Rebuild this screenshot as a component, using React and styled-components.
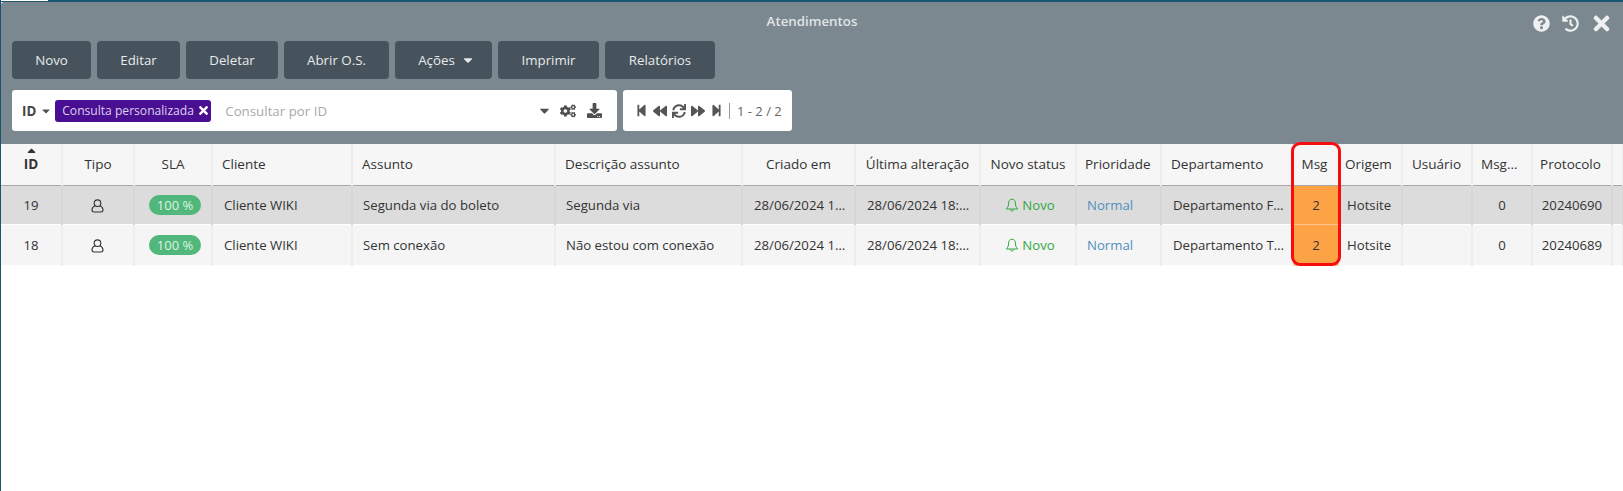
import React from 'react';
import styled, { createGlobalStyle } from 'styled-components';
import { FaQuestionCircle, FaHistory, FaTimes, FaCogs, FaDownload, FaStepBackward, FaBackward, FaSync, FaForward, FaStepForward, FaCaretDown, FaCaretUp } from 'react-icons/fa';

const Global = createGlobalStyle`
  html, body { margin: 0; padding: 0; background: #fff; }
  body { font-family: "Open Sans", "Liberation Sans", sans-serif; }
  * { box-sizing: border-box; }
`;

const Page = styled.div`
  position: relative;
  width: 1623px;
  height: 491px;
  overflow: hidden;
  border-left: 1px solid #1c5472;
`;
const TopStrip = styled.div`
  height: 2px;
  background: #1c5472;
  margin-left: -1px;
`;
const TopTab = styled.div`
  width: 48px;
  height: 1px;
  background: #fff;
`;
const Panel = styled.div`
  height: 142px;
  background: #7b888f;
  padding: 0 11px;
  border-top-left-radius: 3px;
  display: flex;
  flex-direction: column;
`;
const TitleBar = styled.div`
  height: 39px;
  display: flex;
  align-items: center;
  justify-content: center;
  position: relative;
`;
const Title = styled.div`
  font-size: 13.3px;
  font-weight: 600;
  color: #e0e4e6;
  margin-top: -2px;
`;
const WindowIcons = styled.div`
  position: absolute;
  right: -1px;
  top: 10px;
  display: flex;
  align-items: center;
  gap: 12px;
  color: #eef0f1;
  svg { display: block; }
  svg:last-child { margin-left: -1px; }
`;
const Toolbar = styled.div`
  display: flex;
  gap: 6px;
`;
const Button = styled.button`
  height: 38px;
  width: ${p => p.$w}px;
  border: 0;
  border-radius: 4px;
  background: #47535c;
  color: #e8eaeb;
  font: 400 13.3px "Open Sans", sans-serif;
  display: flex;
  align-items: center;
  justify-content: center;
  gap: 6px;
  padding: 0 0 0 ${p => p.$pl || 0}px;
`;
const SearchRow = styled.div`
  display: flex;
  gap: 6px;
  margin-top: 11px;
`;
const SearchBox = styled.div`
  width: 605px;
  height: 41px;
  background: #fff;
  border-radius: 3px;
  display: flex;
  align-items: center;
  padding: 0 15px 0 10px;
  color: #555;
`;
const FieldLabel = styled.span`
  font-size: 13.3px;
  font-weight: 700;
  color: #444;
`;
const Caret = styled.span`
  display: inline-flex;
  font-size: ${p => p.$s || 12}px;
  margin: ${p => p.$m || '0'};
`;
const Chip = styled.span`
  height: 22px;
  width: 156px;
  padding-left: 7px;
  border-radius: 3px;
  background: #4a0e92;
  color: #dcd0ee;
  font-size: 12.1px;
  display: flex;
  align-items: center;
  gap: 3px;
  white-space: nowrap;
`;
const Placeholder = styled.span`
  flex: 1;
  margin-left: 14px;
  font-size: 13.3px;
  color: #a9a9a9;
`;
const Tools = styled.span`
  display: flex;
  align-items: center;
  gap: 11px;
  color: #4f4f4f;
  svg:first-child { margin-right: -3px; }
`;
const Pager = styled.div`
  width: 169px;
  height: 41px;
  background: #fff;
  border-radius: 3px;
  display: flex;
  align-items: center;
  padding-left: 12px;
  color: #555;
  gap: 5px;
`;
const PagerCount = styled.span`
  margin-left: 1px;
  padding-left: 7px;
  border-left: 1px solid #999;
  font-size: 13px;
  line-height: 16px;
  color: #666;
  white-space: nowrap;
`;
const Table = styled.table`
  border-collapse: collapse;
  table-layout: fixed;
  width: 1622px;
  font-size: 13.2px;
  color: #333;
`;
const Th = styled.th`
  height: 41px;
  padding: 0 ${p => p.$pr ?? 4}px 0 ${p => p.$pl ?? 4}px;
  background: #f6f6f6;
  border-right: 2px solid #ededed;
  border-bottom: 1px solid #a8a8a8;
  text-align: ${p => (p.$left ? 'left' : 'center')};
  font-size: 13.5px;
  font-weight: ${p => (p.$bold ? 700 : 400)};
  white-space: nowrap;
  overflow: hidden;
  text-overflow: ellipsis;
  color: #333;
`;
const SortMark = styled.span`
  display: flex;
  justify-content: center;
  align-items: center;
  height: 6px;
  font-size: 13px;
  margin-top: -6px;
  margin-bottom: -1px;
  svg { flex: none; transform: translateY(-2px); }
`;
const Td = styled.td`
  height: ${p => p.$h}px;
  padding: 0 ${p => p.$pr ?? 4}px 0 ${p => p.$pl ?? 4}px;
  background: ${p => (p.$hl ? '#fda245' : p.$even ? '#f5f5f5' : '#dcdcdc')};
  border-right: 2px solid ${p => (p.$even ? '#ededed' : '#d6d6d6')};
  border-bottom: ${p => (p.$hl ? '1px solid #fcc58b' : '1px solid transparent')};
  text-align: ${p => (p.$left ? 'left' : 'center')};
  white-space: nowrap;
  overflow: hidden;
  text-overflow: ellipsis;
  color: ${p => p.$color || '#333'};
`;
const SlaPill = styled.span`
  display: inline-block;
  width: 52px;
  height: 20px;
  line-height: 20px;
  border-radius: 10px;
  background: #52b77a;
  color: #dff3e6;
  font-size: 13px;
  text-align: center;
`;
const Status = styled.span`
  display: inline-flex;
  align-items: center;
  gap: 3px;
  color: #32a83c;
  vertical-align: middle;
  margin-top: 1px;
`;
const Highlight = styled.div`
  position: absolute;
  left: 1290px;
  top: 142px;
  width: 50px;
  height: 124px;
  border: 3px solid #f70d0d;
  border-radius: 9px;
  pointer-events: none;
`;

const UserIcon = () => (
  <svg width="13" height="14" viewBox="0 0 13 14" fill="none" stroke="#333" strokeWidth="1.1" style={{ verticalAlign: 'middle' }}>
    <circle cx="6.500" cy="4.200" r="3.300" />
    <path d="M3.900 6.800C2.100 7.700 1 9 1 10.800c0 1.400.7 2.200 2 2.200h7c1.300 0 2-.8 2-2.200 0-1.800-1.100-3.100-2.900-4" />
  </svg>
);
const BellIcon = () => (
  <svg width="14" height="14" viewBox="0 0 14 14" fill="none" stroke="#32a83c" strokeWidth="1">
    <path d="M7 1.200C4.800 1.200 3.600 2.900 3.600 5c0 3-.9 4.400-2.200 6h11.200c-1.300-1.600-2.200-3-2.200-6 0-2.100-1.200-3.800-3.400-3.800Z" />
    <path d="M5.400 11.400c.1 1 .7 1.600 1.600 1.600s1.500-.6 1.600-1.600" />
  </svg>
);

const columns = [
  { w: 61, label: 'ID', bold: true, sort: true, key: 'id' },
  { w: 72, label: 'Tipo', tdPad: [2, 4], key: 'tipo' },
  { w: 78, label: 'SLA', tdPad: [8, 4], key: 'sla' },
  { w: 140, label: 'Cliente', left: true, thPad: [9, 4], tdPad: [11, 10], key: 'cliente' },
  { w: 203, label: 'Assunto', left: true, thPad: [9, 4], tdPad: [10, 10], key: 'assunto' },
  { w: 187, label: 'Descrição assunto', left: true, thPad: [9, 4], tdPad: [10, 10], key: 'descricao' },
  { w: 113, label: 'Criado em', tdLeft: true, tdPad: [11, 6], key: 'criado' },
  { w: 125, label: 'Última alteração', tdLeft: true, tdPad: [11, 6], key: 'alterado' },
  { w: 96, label: 'Novo status', tdPad: [8, 4], key: 'status' },
  { w: 85, label: 'Prioridade', left: true, thPad: [8, 2], tdPad: [10, 4], key: 'prioridade' },
  { w: 132, label: 'Departamento', left: true, thPad: [9, 4], tdPad: [11, 6], key: 'departamento' },
  { w: 46, label: 'Msg', thPad: [2, 5], key: 'msg', hl: true },
  { w: 63, label: 'Origem', left: true, thPad: [5, 0], tdPad: [7, 0], key: 'origem' },
  { w: 70, label: 'Usuário', left: true, thPad: [9, 4], tdPad: [11, 4], key: 'usuario' },
  { w: 60, label: 'Msg não lidas', thPad: [8, 11], key: 'naoLidas' },
  { w: 80, label: 'Protocolo', thPad: [2, 5], key: 'protocolo' },
  { w: 11, label: 'IP', left: true, thPad: [9, 0], key: 'ip' },
];

const rows = [
  { id: '19', cliente: 'Cliente WIKI', assunto: 'Segunda via do boleto', descricao: 'Segunda via', criado: '28/06/2024 18:12:45', alterado: '28/06/2024 18:12:45', departamento: 'Departamento Financeiro', naoLidas: '0', protocolo: '20240690' },
  { id: '18', cliente: 'Cliente WIKI', assunto: 'Sem conexão', descricao: 'Não estou com conexão', criado: '28/06/2024 18:10:12', alterado: '28/06/2024 18:10:12', departamento: 'Departamento Técnico', naoLidas: '0', protocolo: '20240689' },
];

const renderCell = (col, row) => {
  switch (col.key) {
    case 'tipo': return <UserIcon />;
    case 'sla': return <SlaPill>100 %</SlaPill>;
    case 'status': return <Status><BellIcon />Novo</Status>;
    case 'prioridade': return 'Normal';
    case 'msg': return '2';
    case 'origem': return 'Hotsite';
    default: return row[col.key] || '';
  }
};

export default function App() {
  return (
    <Page>
      <Global />
      <TopStrip><TopTab /></TopStrip>
      <Panel>
        <TitleBar>
          <Title>Atendimentos</Title>
          <WindowIcons>
            <FaQuestionCircle size={17} />
            <FaHistory size={17} />
            <FaTimes size={23} />
          </WindowIcons>
        </TitleBar>
        <Toolbar>
          <Button $w={79}>Novo</Button>
          <Button $w={83}>Editar</Button>
          <Button $w={92}>Deletar</Button>
          <Button $w={105}>Abrir O.S.</Button>
          <Button $w={97} $pl={6}>Ações <Caret $s={14}><FaCaretDown /></Caret></Button>
          <Button $w={101}>Imprimir</Button>
          <Button $w={110}>Relatórios</Button>
        </Toolbar>
        <SearchRow>
          <SearchBox>
            <FieldLabel>ID</FieldLabel>
            <Caret $s={12} $m="0 3px 0 4px"><FaCaretDown /></Caret>
            <Chip>Consulta personalizada <FaTimes size={13} color="#fff" /></Chip>
            <Placeholder>Consultar por ID</Placeholder>
            <Tools>
              <FaCaretDown size={15} />
              <FaCogs size={16} />
              <FaDownload size={15} />
            </Tools>
          </SearchBox>
          <Pager>
            <FaStepBackward size={13} />
            <FaBackward size={14} />
            <FaSync size={14} />
            <FaForward size={14} />
            <FaStepForward size={13} />
            <PagerCount>1 - 2 / 2</PagerCount>
          </Pager>
        </SearchRow>
      </Panel>
      <Table>
        <colgroup>
          {columns.map(c => <col key={c.key} style={{ width: c.w }} />)}
        </colgroup>
        <thead>
          <tr>
            {columns.map(c => (
              <Th key={c.key} $left={c.left} $bold={c.bold} $pl={c.thPad?.[0]} $pr={c.thPad?.[1]}>
                {c.sort && <SortMark><FaCaretUp /></SortMark>}
                {c.label}
              </Th>
            ))}
          </tr>
        </thead>
        <tbody>
          {rows.map((r, i) => (
            <tr key={r.id}>
              {columns.map(c => (
                <Td
                  key={c.key}
                  $h={i === 0 ? 39 : 41}
                  $even={i === 1}
                  $left={c.left || c.tdLeft}
                  $pl={c.tdPad?.[0]}
                  $pr={c.tdPad?.[1]}
                  $hl={c.hl}
                  $color={c.key === 'prioridade' ? '#4f8fc0' : undefined}
                >
                  {renderCell(c, r)}
                </Td>
              ))}
            </tr>
          ))}
        </tbody>
      </Table>
      <Highlight />
    </Page>
  );
}
